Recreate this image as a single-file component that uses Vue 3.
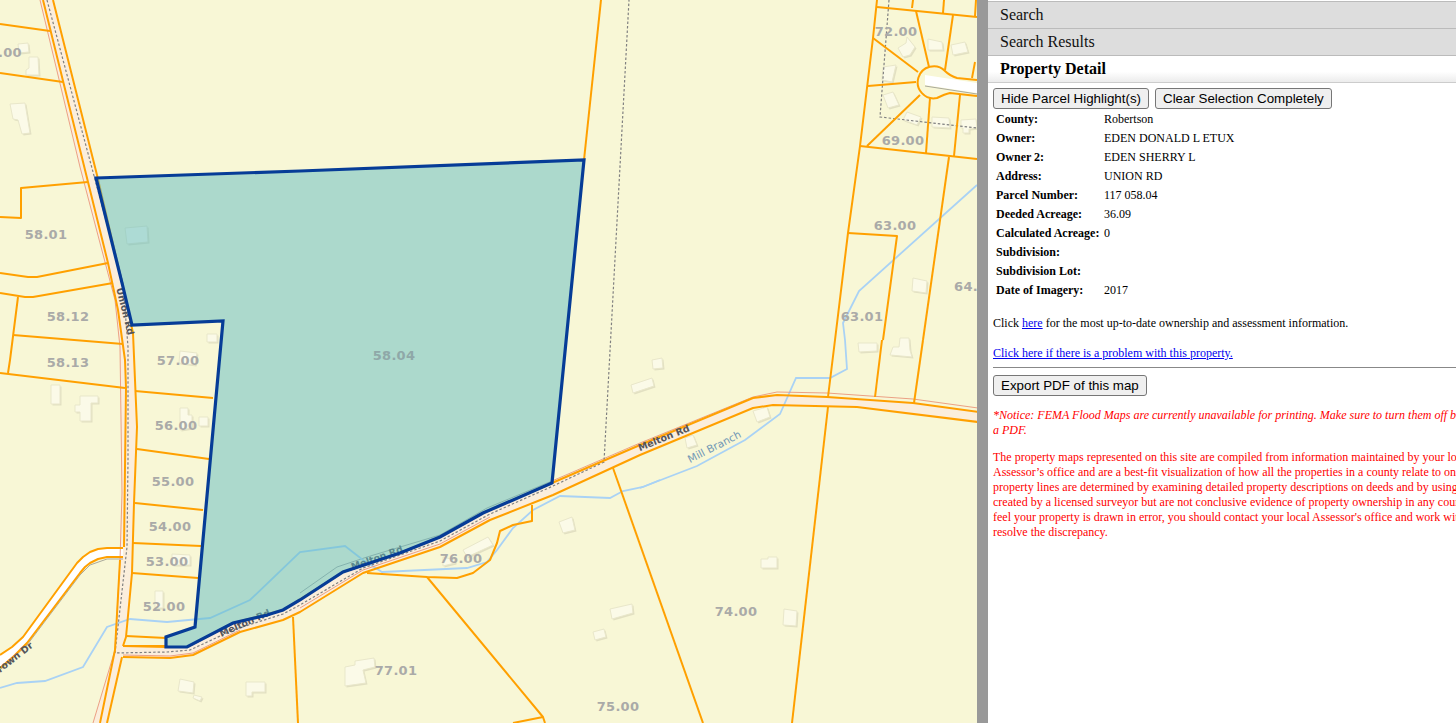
<script setup>
const parcels = [
  '0,24 50,31','0,73 63,82','88,182 21,188 21,218 0,217','0,273 28,277 37,277 108,263','0,293 25,297 33,297 113,283',
  '18,297 10,360 8,373','13,335 123,344','0,373 125,388','135,391 213,398','137,449 209,459','135,503 203,510','133,543 201,546','132,573 198,578',
  '126,636 166,638','123,646 166,646',
  '367,573 427,577 457,578 473,573 490,560 497,543 500,531 513,525 532,521 532,505',
  '427,577 543,717 545,723','513,723 543,717','613,468 703,723','293,617 298,723',
  '828,407 792,723','882,340 875,397','923,340 914,403',
  '877,0 873,38 860,146 848,233 835,340 828,397',
  '877,7 977,17','913,0 912,8','944,0 943,13','976,0 975,16','916,11 929,67','953,15 945,70','873,38 918,72','868,86 916,82','920,95 867,146',
  '860,146 977,159','930,98 926,153','960,95 954,156','949,157 923,340','848,233 897,236 883,340','975,62 972,78',
  '601,0 584,160',
  '43,0 88,182 108,263 118,310 125,360 126,388 124,547','53,0 97,175 123,287 133,333 137,427 134,503 132,573 126,637 123,646',
  '120,560 115,650 100,723','122,657 107,723',
  '123,646 166,647 187,647 233,623 283,610 343,572 400,553 440,537 483,513 552,483 640,445 753,398 777,395 827,397 913,403 978,412',
  '123,657 170,658 193,655 240,632 283,620 300,612 363,573 440,547 490,520 553,495 640,455 753,408 773,405 857,407 978,422',
  '123,548 107,548 98,549 90,552 83,557 77,563 23,637 12,647 0,655','123,557 107,557 98,559 90,563 85,567 80,573 27,643 14,656 0,668'
]
const streams = [
  '0,688 17,683 45,681 83,667 107,627 130,619 167,622 210,618 250,600 300,552 345,546 363,560 382,572 467,568 487,562 497,550 513,528 533,510 560,496 610,498 623,491 643,487 660,480',
  '640,488 697,466 745,440 780,414 796,378 830,378 847,369 845,340 843,323 859,291 977,185'
]
const pink = [
  '40,0 80,167 115,300 120,347 122,493 120,560 115,650 93,723',
  '552,481 640,443 753,397 777,392 827,393 913,399 978,408',
  '300,608 363,570 440,544 490,517',
  '123,655 170,656 193,653 240,630'
]
const dashed = [
  '47,0 97,187 123,283 128,347 128,460 127,547 115,653 167,652 190,650 233,630 283,614 300,605 363,568 440,541 490,514 553,486 604,462 629,0',
  '889,0 880,117 977,128'
]
const buildings = [
  '18,44 28,43 29,52 19,53','29,57 38,57 39,75 26,75 26,70 29,68','10,104 25,103 27,115 30,133 22,134 18,120 13,119',
  '125,228 147,226 148,242 127,244','207,334 217,334 217,342 207,342','180,351 197,353 195,365 179,363',
  '51,385 60,385 60,404 51,404','80,396 98,396 98,403 91,403 91,421 80,421 80,412 75,412 75,405 80,405',
  '180,408 188,408 188,415 192,415 192,428 180,430','199,417 208,417 208,426 199,426','172,554 190,555 190,565 172,565',
  '155,591 163,591 163,608 155,608','180,679 194,682 193,693 178,691','194,695 202,697 200,701 193,698','246,682 265,682 265,692 252,692 252,696 246,696',
  '463,550 488,537 493,545 467,557','443,557 455,560 455,563 443,566','559,522 572,517 575,530 563,533','610,609 632,604 633,613 612,619',
  '593,632 604,629 606,637 595,640','345,667 355,665 355,661 374,658 375,667 363,670 366,683 345,686','652,360 662,358 663,368 653,369',
  '631,385 652,378 654,386 633,393','753,411 767,407 770,417 757,422','685,438 693,435 697,445 687,448','761,559 768,559 768,557 777,557 777,568 761,568',
  '784,609 797,611 796,626 783,625','858,343 877,343 877,351 859,352','893,347 899,347 900,338 909,338 910,350 912,357 890,355',
  '913,278 927,281 926,293 912,291','898,48 906,43 907,37 915,47 910,55 903,57','928,39 942,42 943,50 928,50','951,45 965,42 968,52 953,55',
  '883,67 896,65 892,82 882,80','883,95 893,92 899,105 888,108','907,112 921,117 917,125 903,120','932,117 949,118 950,128 932,127',
  '961,120 976,119 977,128 969,129 969,133 963,133 963,128 961,128'
]
const labels = [
  ['.00',10,57],['58.01',46,239],['58.12',68,321],['58.13',68,367],['57.00',178,365],['56.00',176,430],['55.00',173,486],['54.00',170,531],
  ['53.00',167,566],['52.00',164,611],['76.00',461,563],['77.01',396,675],['75.00',618,711],['74.00',736,616],['63.01',862,321],['63.00',895,230],
  ['64.',966,291],['69.00',903,145],['72.00',896,36]
]
const roadNames = [
  ['Union Rd',122,312,76],['Melton Rd',665,441,-22],['Melton Rd',378,561,-20],['Melton Rd',246,626,-24],['Brown Dr',14,662,-38]
]
const details = [
  ['County:','Robertson'],['Owner:','EDEN DONALD L ETUX'],['Owner 2:','EDEN SHERRY L'],['Address:','UNION RD'],['Parcel Number:','117 058.04'],
  ['Deeded Acreage:','36.09'],['Calculated Acreage:','0'],['Subdivision:',''],['Subdivision Lot:',''],['Date of Imagery:','2017']
]
const parcelShape = '96,178 300,171 584,160 552,483 483,513 440,537 400,553 343,572 300,600 283,610 267,615 233,623 187,647 166,647 166,637 195,627 223,321 132,325 123,287'
</script>

<template>
  <div class="page">
    <svg class="map" width="977" height="723" viewBox="0 0 977 723">
      <rect width="977" height="723" class="land" />
      <polygon class="road" points="40,0 80,167 115,300 120,347 122,493 120,560 115,650 93,723 107,723 122,657 123,646 126,637 132,573 134,503 137,427 133,333 123,287 97,175 53,0" />
      <polygon class="road" points="123,646 166,647 187,647 233,623 283,610 343,572 400,553 440,537 483,513 552,483 640,445 753,398 777,395 827,397 913,403 978,412 978,422 857,407 773,405 753,408 640,455 553,495 490,520 440,547 363,573 300,612 283,620 240,632 193,655 170,658 123,657" />
      <polygon class="drive" points="123,548 107,548 98,549 90,552 83,557 77,563 23,637 12,647 0,655 0,668 14,656 27,643 80,573 85,567 90,563 98,559 107,557 123,557" />
      <polyline class="edge" points="123,559 107,559 90,565 80,575 27,645 0,670" />
      <polyline class="edge" points="300,593 337,567 367,557 440,535 487,508 552,481" />
      <g v-for="b in buildings" :key="b">
        <polygon class="shade" :points="b" transform="translate(1.5 1.5)" />
        <polygon class="house" :points="b" />
      </g>
      <polygon class="drive-end" points="925,75 977,83 977,93 925,85" />
      <polyline class="edge" points="925,86 977,94" />
      <polyline v-for="s in streams" :key="s" class="stream" :points="s" />
      <polyline v-for="p in pink" :key="p" class="pink" :points="p" />
      <polyline v-for="d in dashed" :key="d" class="dash" :points="d" />
      <text v-for="l in labels" :key="l[0]" class="num" :x="l[1]" :y="l[2]">{{ l[0] }}</text>
      <polyline v-for="p in parcels" :key="p" class="lot" :points="p" />
      <path class="lot" d="M977,80 L957,78 Q950,76 945,71 A16,16 0 1 0 937,98 Q945,94 950,93 L977,96" />
      <text class="stream-name" transform="translate(716 450) rotate(-27)">Mill Branch</text>
      <text v-for="r in roadNames" :key="r[1]" class="road-name" :transform="`translate(${r[1]} ${r[2]}) rotate(${r[3]})`">{{ r[0] }}</text>
      <polygon class="tint" :points="parcelShape" />
      <text class="num teal" x="394" y="360">58.04</text>
      <polygon class="outline" :points="parcelShape" />
    </svg>
    <div class="splitter"></div>
    <aside class="panel">
      <h3 class="bar">Search</h3>
      <h3 class="bar">Search Results</h3>
      <h3 class="bar active">Property Detail</h3>
      <div class="content">
        <div class="btns">
          <button>Hide Parcel Highlight(s)</button>
          <button>Clear Selection Completely</button>
        </div>
        <dl class="info">
          <template v-for="d in details" :key="d[0]">
            <dt>{{ d[0] }}</dt>
            <dd>{{ d[1] }}</dd>
          </template>
        </dl>
        <p class="line first">Click <a href="#">here</a> for the most up-to-date ownership and assessment information.</p>
        <p class="line second"><a href="#">Click here if there is a problem with this property.</a></p>
        <hr />
        <button class="export">Export PDF of this map</button>
        <p class="notice"><em>*Notice: FEMA Flood Maps are currently unavailable for printing. Make sure to turn them off before creating<br />a PDF.</em></p>
        <p class="legal">
          The property maps represented on this site are compiled from information maintained by your local Property<br />
          Assessor’s office and are a best-fit visualization of how all the properties in a county relate to one another. The<br />
          property lines are determined by examining detailed property descriptions on deeds and by using surveys<br />
          created by a licensed surveyor but are not conclusive evidence of property ownership in any court. If you<br />
          feel your property is drawn in error, you should contact your local Assessor's office and work with them to<br />
          resolve the discrepancy.
        </p>
      </div>
    </aside>
  </div>
</template>

<style>
html, body { margin: 0; overflow: hidden; }
</style>

<style scoped>
.page { display: flex; width: 1456px; height: 723px; overflow: hidden; background: #fff; font-family: "Liberation Serif", serif; }
.map { display: block; flex: none; }
.land { fill: #f8f7d6; }
.road { fill: #fbeedc; }
.drive { fill: #fff; }
.drive-end { fill: #fff; }
.edge { fill: none; stroke: #a9a99b; stroke-width: 1; }
.house { fill: #fbfae8; stroke: #e9e7ca; stroke-width: 1; }
.shade { fill: #e2e0c2; }
.stream { fill: none; stroke: #a9d2f5; stroke-width: 1.8; }
.pink { fill: none; stroke: #ea967a; stroke-width: .9; }
.dash { fill: none; stroke: #808080; stroke-width: 1.2; stroke-dasharray: 2.5 2; }
.lot { fill: none; stroke: #ffa000; stroke-width: 2; stroke-linejoin: round; }
.num { font: bold 13px "DejaVu Sans", sans-serif; letter-spacing: .3px; fill: #aaaaa8; text-anchor: middle; }
.num.teal { fill: #8fa8a8; }
.road-name { font: bold 9.5px "DejaVu Sans", sans-serif; fill: #55555a; text-anchor: middle; }
.stream-name { font: 10.5px "DejaVu Sans", sans-serif; fill: #7298b5; text-anchor: middle; }
.tint { fill: #60bbc2; fill-opacity: .5; }
.outline { fill: none; stroke: #063c97; stroke-width: 3.2; stroke-linejoin: miter; }
.splitter { flex: none; width: 11px; background: #999; }
.panel { flex: none; width: 640px; padding-top: 1px; box-sizing: border-box; }
.bar { margin: 0; height: 26px; line-height: 26px; padding-left: 12px; font-size: 16px; font-weight: normal; color: #111; background: #ddd; border-top: 1px solid #bbb; border-bottom: 0; }
.bar.active { height: 26px; font-weight: bold; color: #000; background: linear-gradient(#fff 60%, #ececec); border-top: 1px solid #bbb; border-bottom: 1px solid #ccc; }
.content { padding: 5px 0 0 5px; font-size: 12px; color: #000; }
.btns { display: flex; gap: 6px; padding-bottom: 1px; }
button { font: 13.333px "Liberation Sans", sans-serif; height: 21px; padding: 1px 7px; background: #efefef; color: #000; border: 1px solid #767676; border-radius: 3px; white-space: nowrap; }
.info { display: grid; grid-template-columns: 108px 1fr; grid-auto-rows: 19px; margin: 0; padding-left: 3px; line-height: 19px; }
.info dt { font-weight: bold; }
.info dd { margin: 0; }
.line { margin: 0; line-height: 15px; }
.line.first { margin-top: 16px; }
.line.second { margin-top: 15px; }
.line a { color: #00e; }
hr { margin: 6px 0 7px; border: 0; border-top: 1px solid #888; height: 0; }
.export { display: block; }
.notice { margin: 12px 0 0; color: #f00; line-height: 15px; white-space: nowrap; }
.legal { margin: 12px 0 0; color: #f00; line-height: 15px; white-space: nowrap; }
</style>
